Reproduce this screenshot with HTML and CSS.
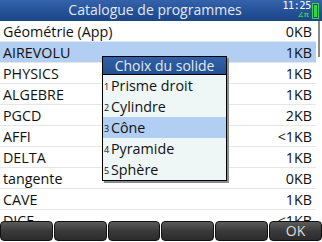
FILE: index.html
```html
<!DOCTYPE html>
<html lang="fr">
<head>
<meta charset="utf-8">
<link rel="stylesheet" href="styles.css">
</head>
<body>
<div class="screen">
  <div class="titlebar">
    <div class="title">Catalogue de programmes</div>
    <div class="status">
      <div class="status-text">
        <span class="clock">11:25</span>
        <span class="mode">∡π</span>
      </div>
      <div class="battery"><div class="battery-fill"></div></div>
    </div>
  </div>
  <div class="listwrap">
    <ul class="list">
      <li class="row"><span>Géométrie (App)</span><span>0KB</span></li>
      <li class="row sel"><span>AIREVOLU</span><span>1KB</span></li>
      <li class="row"><span>PHYSICS</span><span>1KB</span></li>
      <li class="row"><span>ALGEBRE</span><span>1KB</span></li>
      <li class="row"><span>PGCD</span><span>2KB</span></li>
      <li class="row"><span>AFFI</span><span>&lt;1KB</span></li>
      <li class="row"><span>DELTA</span><span>1KB</span></li>
      <li class="row"><span>tangente</span><span>0KB</span></li>
      <li class="row"><span>CAVE</span><span>1KB</span></li>
      <li class="row"><span>DICE</span><span>&lt;1KB</span></li>
    </ul>
    <div class="scrollbar"></div>
  </div>
  <div class="softkeys">
    <div class="key"></div>
    <div class="key"></div>
    <div class="key"></div>
    <div class="key"></div>
    <div class="key"></div>
    <div class="key">OK</div>
  </div>
  <div class="menu">
    <div class="menu-title">Choix du solide</div>
    <ul class="menu-list">
      <li class="item"><span class="num">1</span>Prisme droit</li>
      <li class="item"><span class="num">2</span>Cylindre</li>
      <li class="item sel"><span class="num">3</span>Cône</li>
      <li class="item"><span class="num">4</span>Pyramide</li>
      <li class="item"><span class="num">5</span>Sphère</li>
    </ul>
  </div>
</div>
</body>
</html>
```
FILE: styles.css
```css
* { box-sizing: border-box; }
html, body { margin: 0; padding: 0; background: #fff; }
body { width: 322px; height: 242px; overflow: hidden; font-family: "Open Sans", "DejaVu Sans", sans-serif; }
.screen { position: relative; width: 322px; height: 242px; display: flex; flex-direction: column; background: #fff; overflow: hidden; }

.titlebar { height: 21px; flex: none; display: flex; align-items: stretch; background: linear-gradient(#3563ab, #234f95 60%, #1d4688); color: #e3e9f4; }
.title { flex: 1; text-align: center; font-size: 14px; line-height: 20px; padding-left: 30px; }
.status { width: 42px; display: flex; align-items: flex-start; gap: 1px; padding-top: 1px; }
.status-text { display: flex; flex-direction: column; align-items: flex-end; width: 31px; }
.clock { font-family: "DejaVu Sans Mono", monospace; font-size: 10px; line-height: 10px; height: 10px; color: #fff; letter-spacing: -0.3px; }
.mode { font-size: 7px; line-height: 8px; height: 8px; color: #2fd14a; font-weight: bold; padding-right: 2px; }
.battery { width: 7px; height: 16px; margin-top: 2px; border: 1px solid #36d24c; background: #1d4688; padding: 1px; display: flex; }
.battery-fill { flex: 1; background: #36d24c; }

.listwrap { flex: 1; display: flex; overflow: hidden; }
.list { list-style: none; margin: 0; padding: 0; flex: 1; }
.row { height: 21px; display: flex; justify-content: space-between; align-items: center; padding: 0 4px 0 3px; font-size: 14.3px; color: #111; border-bottom: 1px solid #e4e6e8; }
.row.sel { background: #b2cef2; }
.scrollbar { width: 6px; flex: none; display: flex; justify-content: center; }
.scrollbar::before { content: ""; width: 2px; height: 36px; background: #8a8a8a; }

.softkeys { height: 21px; flex: none; display: flex; gap: 1px; padding: 0 0 1px 0; background: #fff; }
.key { flex: 1; border: 1px solid #111; border-radius: 4px; background: linear-gradient(#5a5a5a, #3a3a3a 50%, #2b2b2b); color: #ddd; font-size: 14px; line-height: 17px; text-align: center; overflow: hidden; }

.menu { position: absolute; left: 102px; top: 56px; width: 125px; border: 1px solid #000; box-shadow: 2px 2px 0 #8c8c8c; background: #eef7f6; }
.menu-title { height: 18px; background: linear-gradient(#3260a8, #22508f); color: #e3e9f4; font-size: 14px; line-height: 17px; text-align: center; border-bottom: 1px solid #000; }
.menu-list { list-style: none; margin: 0; padding: 0; }
.item { height: 21px; display: flex; align-items: center; font-size: 14.3px; color: #111; padding-left: 1px; }
.item.sel { background: #b2cef2; }
.num { font-size: 9px; width: 7px; margin-top: 1px; }
```
